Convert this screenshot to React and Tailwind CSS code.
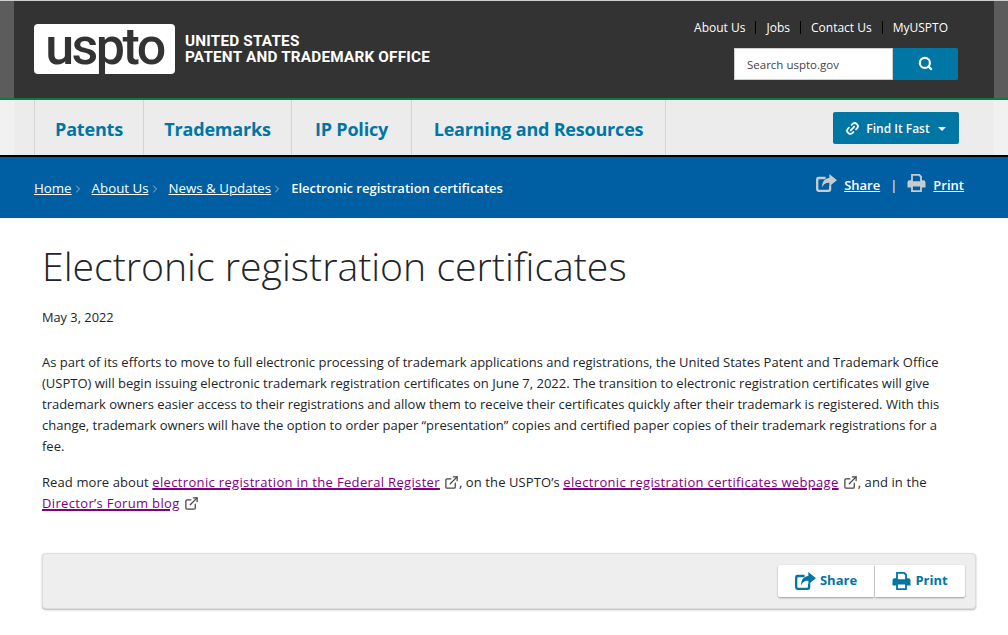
import React from 'react';
import {Search, Link2, ChevronRight, ExternalLink} from 'lucide-react';

function ShareIcon({className}) {
    return (
        <svg viewBox="0 0 22 20" className={className} fill="currentColor">
            <path d="M2.600 3H10v2.400H3.400a1 1 0 0 0-1 1v9.200a1 1 0 0 0 1 1h9.200a1 1 0 0 0 1-1V13l2.400-2v5.600a2.600 2.600 0 0 1-2.600 2.400H2.600A2.600 2.600 0 0 1 0 16.400V5.600A2.600 2.600 0 0 1 2.600 3z"/>
            <path d="M14 0l8 6.500-8 6.500V9.200c-3.600 0-6 1-7.500 5C6 8.500 9 4.600 14 4.200z"/>
        </svg>
    );
}

function PrintIcon({className}) {
    return (
        <svg viewBox="0 0 20 20" className={className} fill="currentColor">
            <path fillRule="evenodd" d="M4 0h9.500L16 2.500V7h1.500A2.500 2.500 0 0 1 20 9.500V15h-4v5H4v-5H0V9.500A2.500 2.500 0 0 1 2.500 7H4zM6 2v6h8V3.500L12.500 2zM6 14v4h8v-4z"/>
        </svg>
    );
}

function Crumb({children}) {
    return (
        <span className="flex items-center mr-[8px] text-[13.300px]">
            <a href="#" className="underline">{children}</a>
            <ChevronRight size={12} strokeWidth={1.5} className="text-gray-300"/>
        </span>
    );
}

function Outbound() {
    return <ExternalLink size={15} strokeWidth={2} className="inline-block ml-[4px] mb-[3px] text-[#444]"/>;
}

function DocLink({children}) {
    return <a href="#" className="text-[#800080] font-medium tracking-[0.34px] underline decoration-[1.5px]">{children}</a>;
}

function App() {
    const navItems = [
        {label: 'Patents', width: 'w-[109px]'},
        {label: 'Trademarks', width: 'w-[148px]'},
        {label: 'IP Policy', width: 'w-[120px]'},
        {label: 'Learning and Resources', width: 'w-[254px]'}
    ];

    return (
        <div className="w-[1008px] h-[635px] overflow-hidden bg-white text-[#212529] font-['Open_Sans',sans-serif]">
            <div className="bg-[#5c5c5c] border-t border-[#cfcfcf] px-[14px]">
                <div className="h-[97px] bg-[#333333] flex justify-between pl-[20px] pr-[36px]">
                    <div className="flex items-center mb-[2px]">
                        <div className="w-[141px] h-[50px] bg-white rounded-[4px] flex items-center justify-center">
                            <span className="text-[#333333] text-[52px] font-medium leading-[50px] mb-[3px] tracking-[-2.500px] font-['Roboto',sans-serif]">uspto</span>
                        </div>
                        <div className="ml-[10px] text-white text-[15.300px] leading-[16px] font-bold font-['Roboto',sans-serif] tracking-[0.2px] uppercase">
                            <div>United States</div>
                            <div>Patent and Trademark Office</div>
                        </div>
                    </div>
                    <div className="flex flex-col items-end">
                        <div className="flex items-center text-white text-[12px] mt-[20px] mr-[10px] leading-[13px]">
                            <a href="#" className="pr-[10px] border-r border-black">About Us</a>
                            <a href="#" className="px-[10px] border-r border-black">Jobs</a>
                            <a href="#" className="px-[10px] border-r border-black">Contact Us</a>
                            <a href="#" className="pl-[10px]">MyUSPTO</a>
                        </div>
                        <div className="flex mt-[14px] h-[32px]">
                            <div className="w-[159px] bg-white border border-[#cccccc] text-[11.500px] text-[#444] pl-[12px] pt-[1px] flex items-center">Search uspto.gov</div>
                            <div className="w-[65px] bg-[#0076a5] rounded-r-[2px] flex items-center justify-center">
                                <Search size={15} strokeWidth={3.5} className="text-white mb-[2px]"/>
                            </div>
                        </div>
                    </div>
                </div>
            </div>

            <div className="border-t-2 border-[#0a7d3c] border-b-2 border-b-black bg-[#f1f1f1] h-[59px] px-[14px]">
                <div className="h-[55px] bg-[#ececec] flex justify-between pl-[20px] pr-[35px]">
                    <div className="flex border-l border-[#d5d5d5]">
                        {navItems.map(item => (
                            <a key={item.label} href="#" className={`${item.width} h-full flex items-center justify-center pt-[3px] border-r border-[#d5d5d5] text-[#0076a5] text-[18px] font-bold tracking-[-0.2px]`}>
                                {item.label}
                            </a>
                        ))}
                    </div>
                    <button className="mt-[12px] w-[126px] h-[32px] pt-[1px] pr-[1px] bg-[#0076a5] rounded-[2px] text-white text-[12px] font-semibold flex items-center justify-center">
                        <Link2 size={15} strokeWidth={2.8} className="-rotate-45 mr-[6px]"/>
                        Find It Fast
                        <span className="ml-[8px] w-0 h-0 border-x-[4px] border-x-transparent border-t-[4px] border-t-white"></span>
                    </button>
                </div>
            </div>

            <div className="h-[61px] bg-[#005ea2] flex justify-between pl-[34px] pr-[44px] text-white text-[13px]">
                <div className="flex items-center pt-[2px]">
                    <Crumb>Home</Crumb>
                    <Crumb>About Us</Crumb>
                    <Crumb>News &amp; Updates</Crumb>
                    <span className="font-semibold">Electronic registration certificates</span>
                </div>
                <div className="flex items-center font-semibold mb-[3px]">
                    <ShareIcon className="w-[21px] h-[19px] text-[#c8ccd0] mr-[7px] mb-[5px]"/>
                    <a href="#" className="underline">Share</a>
                    <span className="mx-[10px] font-normal">|</span>
                    <PrintIcon className="w-[19px] h-[18px] text-[#c8ccd0] mr-[7px] mb-[6px]"/>
                    <a href="#" className="underline">Print</a>
                </div>
            </div>

            <div className="px-[42px]">
                <h1 className="text-[39.200px] font-light leading-[48px] mt-[24px]">Electronic registration certificates</h1>
                <p className="text-[12.800px] mt-[17px] leading-[20px]">May 3, 2022</p>
                <p className="text-[13px] leading-[21px] mt-[25px] w-[918px]">
                    As part of its efforts to move to full electronic processing of trademark applications and registrations, the United States Patent and Trademark Office (USPTO) will begin issuing electronic trademark registration certificates on June 7, 2022. The transition to electronic registration certificates will give trademark owners easier access to their registrations and allow them to receive their certificates quickly after their trademark is registered. With this change, trademark owners will have the option to order paper “presentation” copies and certified paper copies of their trademark registrations for a fee.
                </p>
                <p className="text-[13px] leading-[21px] mt-[15px] w-[924px] tracking-[0.1px]">
                    Read more about <DocLink>electronic registration in the Federal Register</DocLink><Outbound/>, on the USPTO’s <DocLink>electronic registration certificates webpage</DocLink><Outbound/>, and in the <DocLink>Director’s Forum blog</DocLink><Outbound/>
                </p>
                <div className="mt-[39px] w-[934px] h-[56px] bg-[#eeeeee] rounded-[4px] border border-[#dddddd] shadow-[0_1px_2px_rgba(0,0,0,0.3)] flex justify-end items-center pr-[10px]">
                    <a href="#" className="w-[96px] h-[32px] bg-white rounded-l-[2px] shadow-[0_1px_2px_rgba(0,0,0,0.35)] flex items-center justify-center text-[#0076a5] text-[13px] font-bold">
                        <ShareIcon className="w-[21px] h-[19px] mr-[4px]"/>
                        Share
                    </a>
                    <a href="#" className="ml-[1px] w-[90px] h-[32px] bg-white rounded-r-[2px] shadow-[0_1px_2px_rgba(0,0,0,0.35)] flex items-center justify-center text-[#0076a5] text-[13px] font-bold">
                        <PrintIcon className="w-[19px] h-[18px] mr-[4px]"/>
                        Print
                    </a>
                </div>
            </div>
        </div>
    );
}

export default App;
